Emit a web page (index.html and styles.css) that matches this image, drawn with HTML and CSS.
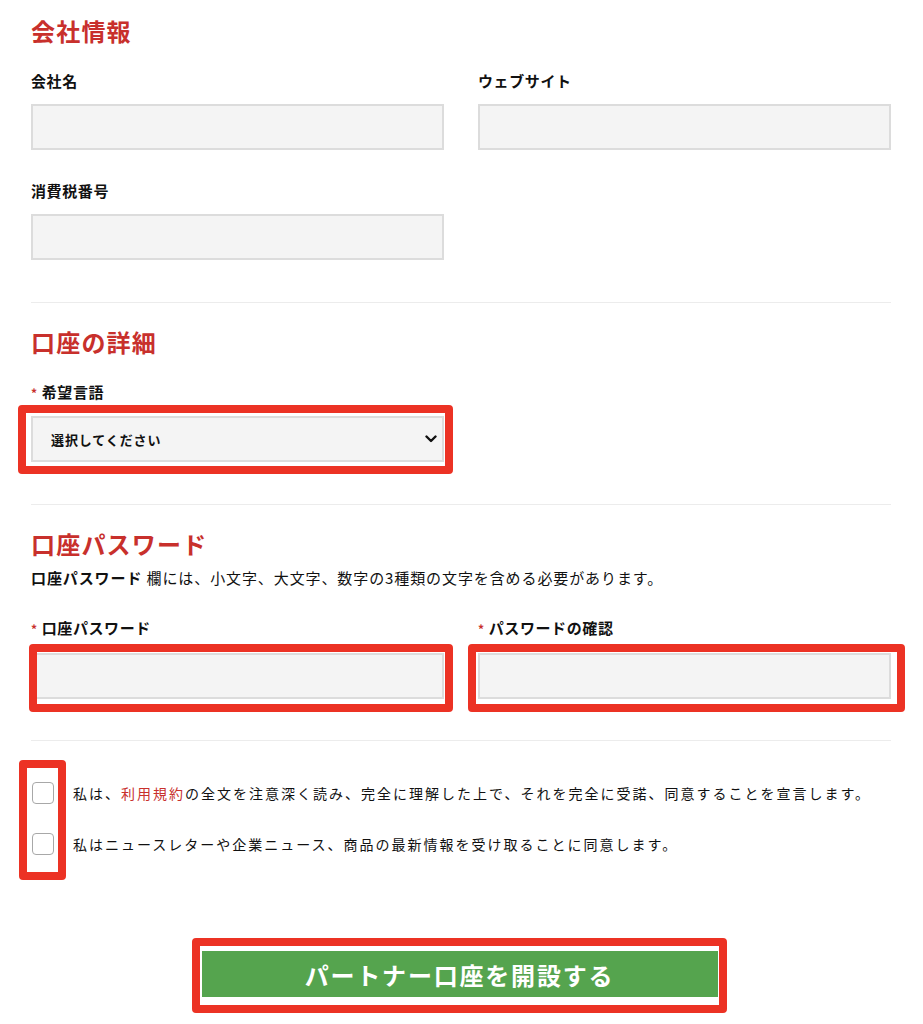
FILE: index.html
```html
<!DOCTYPE html>
<html lang="ja">
<head>
<meta charset="utf-8">
<title>パートナー口座</title>
<link rel="stylesheet" href="styles.css">
</head>
<body>
<form class="page">
  <section class="section first">
    <h2 class="heading">会社情報</h2>
    <div class="grid">
      <div class="field">
        <label class="label">会社名</label>
        <input class="input" type="text">
      </div>
      <div class="field">
        <label class="label">ウェブサイト</label>
        <input class="input" type="text">
      </div>
      <div class="field">
        <label class="label">消費税番号</label>
        <input class="input" type="text">
      </div>
    </div>
  </section>

  <section class="section">
    <h2 class="heading">口座の詳細</h2>
    <div class="grid">
      <div class="field">
        <label class="label"><span class="req">*</span>希望言語</label>
        <div class="wrap">
          <select class="input select">
            <option>選択してください</option>
          </select>
          <svg class="chev" width="12" height="8" viewBox="0 0 12 8"><path d="M1.5 1.5 L6 6 L10.5 1.5" fill="none" stroke="#111" stroke-width="2.4" stroke-linecap="round" stroke-linejoin="round"/></svg>
          <span class="mark mark-select"></span>
        </div>
      </div>
    </div>
  </section>

  <section class="section pw-section">
    <h2 class="heading">口座パスワード</h2>
    <p class="desc"><b>口座パスワード</b> 欄には、小文字、大文字、数字の3種類の文字を含める必要があります。</p>
    <div class="grid pw">
      <div class="field">
        <label class="label"><span class="req">*</span>口座パスワード</label>
        <div class="wrap">
          <input class="input" type="password">
          <span class="mark mark-pw1"></span>
        </div>
      </div>
      <div class="field">
        <label class="label"><span class="req">*</span>パスワードの確認</label>
        <div class="wrap">
          <input class="input" type="password">
          <span class="mark mark-pw2"></span>
        </div>
      </div>
    </div>
  </section>

  <section class="agree">
    <label class="check-row"><input class="box" type="checkbox"><span>私は、<a class="link" href="#">利用規約</a>の全文を注意深く読み、完全に理解した上で、それを完全に受諾、同意することを宣言します。</span></label>
    <label class="check-row"><input class="box" type="checkbox"><span>私はニュースレターや企業ニュース、商品の最新情報を受け取ることに同意します。</span></label>
    <span class="mark mark-checks"></span>
  </section>

  <div class="submit-row">
    <div class="wrap">
      <button class="submit" type="button">パートナー口座を開設する</button>
      <span class="mark mark-btn"></span>
    </div>
  </div>
</form>
</body>
</html>
```
FILE: styles.css
```css
* { box-sizing: border-box; }
html, body { margin: 0; padding: 0; background: #fff; }
body {
  font-family: "Noto Sans CJK JP", "Noto Sans", sans-serif;
  color: #111;
  width: 923px;
  height: 1024px;
  overflow: hidden;
}
.page {
  width: 860px;
  margin-left: 31px;
}
.section {
  border-bottom: 1px solid #ececec;
  padding-top: 23px;
  padding-bottom: 42px;
}
.section.first { padding-top: 15px; }
.section.pw-section { padding-bottom: 41px; }
.heading {
  margin: 0;
  font-size: 24px;
  line-height: 32px;
  font-weight: 700;
  color: #c8302c;
  letter-spacing: 1.2px;
}
.grid {
  display: grid;
  grid-template-columns: 413px 413px;
  column-gap: 34px;
  row-gap: 31px;
  margin-top: 24px;
}
.field { display: flex; flex-direction: column; }
.label {
  font-size: 15px;
  line-height: 20px;
  font-weight: 700;
  margin-bottom: 13px;
  letter-spacing: 0.6px;
}
.req {
  color: #c8302c;
  font-size: 12px;
  margin-right: 4px;
}
.wrap { position: relative; }
.input {
  display: block;
  width: 413px;
  height: 46px;
  border: 2px solid #dcdcdc;
  background: #f4f4f4;
  margin: 0;
  padding: 0 18px;
  font-family: inherit;
  border-radius: 0;
  outline: none;
}
.select {
  appearance: none;
  -webkit-appearance: none;
  font-size: 13px;
  font-weight: 700;
  color: #111;
  letter-spacing: 0.9px;
}
.chev {
  position: absolute;
  right: 7px;
  top: 19px;
}
.mark {
  position: absolute;
  border: 8px solid #ec3224;
  border-radius: 4px;
  pointer-events: none;
}
.mark-select { left: -13px; right: -9px; top: -11px; bottom: -12px; }
.mark-pw1 { left: -2px; right: -9px; top: -9px; bottom: -13px; }
.mark-pw2 { left: -10px; right: -14px; top: -9px; bottom: -13px; }
.desc {
  margin: 7px 0 0;
  font-size: 15px;
  line-height: 22px;
  letter-spacing: 0.9px;
}
.desc b { font-weight: 700; }
.grid.pw { margin-top: 29px; }
.grid.pw .label { margin-bottom: 14px; }
.agree {
  position: relative;
  padding-top: 41px;
  display: flex;
  flex-direction: column;
  gap: 29px;
}
.check-row {
  display: flex;
  align-items: center;
  gap: 19px;
  font-size: 14px;
  line-height: 22px;
  letter-spacing: 2px;
}
.box {
  appearance: none;
  -webkit-appearance: none;
  width: 22px;
  height: 22px;
  margin: 0 0 0 1px;
  border: 1px solid #a8a8a8;
  border-radius: 4px;
  background: #fff;
  flex: none;
}
.link { color: #c8302c; text-decoration: none; }
.mark-checks { left: -12px; top: 19px; width: 47px; height: 120px; }
.submit-row {
  display: flex;
  justify-content: center;
  padding-top: 96px;
  padding-right: 3px;
}
.submit {
  display: block;
  width: 516px;
  height: 46px;
  border: 0;
  margin: 0;
  background: #55a44e;
  color: #fff;
  font-family: inherit;
  font-size: 24px;
  font-weight: 700;
  letter-spacing: 1.8px;
  border-radius: 0;
}
.mark-btn { left: -10px; right: -9px; top: -13px; bottom: -16px; }
```
